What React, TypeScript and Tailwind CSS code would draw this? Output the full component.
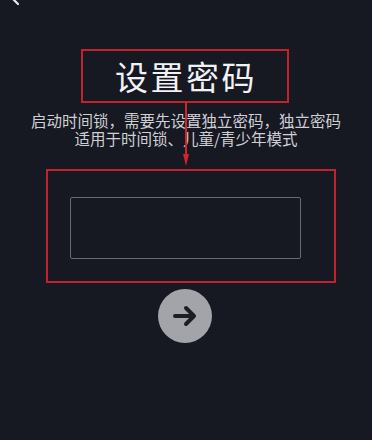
export default function App() {
  return (
    <div
      className="relative w-[372px] h-[440px] overflow-hidden bg-[#161822] flex flex-col"
      style={{ fontFamily: '"Noto Sans CJK SC", "Noto Sans", sans-serif' }}
    >
      {/* back chevron, cut off at the top edge */}
      <svg className="absolute left-[6px] top-[-14px]" width="16" height="20" viewBox="0 0 16 20">
        <path d="M12 2 L4 10 L12 18" fill="none" stroke="#e8e8ec" strokeWidth="2.2" strokeLinecap="round" />
      </svg>

      <div className="ml-[81px] mt-[49px] w-[208px] h-[54px] border-2 border-[#c0232c] flex items-center justify-center">
        <h1 className="text-[33px] leading-none tracking-[2.5px] text-[#f2f2f4] pl-[2px]">设置密码</h1>
      </div>

      <div className="mt-[8px] text-center text-[15.5px] leading-[18px] text-[#cfd0d5]">
        <p>启动时间锁，需要先设置独立密码，独立密码</p>
        <p>适用于时间锁、儿童/青少年模式</p>
      </div>

      <div className="ml-[46px] mt-[22px] w-[290px] h-[114px] border-2 border-[#c0232c] pl-[22px] pt-[26px]">
        <div className="w-[231px] h-[62px] border border-[#666972] rounded-[2px]" />
      </div>

      <div className="mt-[6px] self-center ml-[-2px] w-[54px] h-[54px] rounded-full bg-[#a3a4a9] flex items-center justify-center">
        <svg width="26" height="22" viewBox="0 0 26 22">
          <path
            d="M3 11 H22 M14 3 L22 11 L14 19"
            fill="none"
            stroke="#1c1e26"
            strokeWidth="4"
            strokeLinecap="round"
            strokeLinejoin="round"
          />
        </svg>
      </div>

      {/* red annotation arrow */}
      <svg className="absolute left-[182px] top-[102px]" width="8" height="64" viewBox="0 0 8 64">
        <path d="M4 0 V54" stroke="#d3232b" strokeWidth="2" />
        <path d="M1 52 L7 52 L4 64 Z" fill="#d3232b" />
      </svg>
    </div>
  );
}
